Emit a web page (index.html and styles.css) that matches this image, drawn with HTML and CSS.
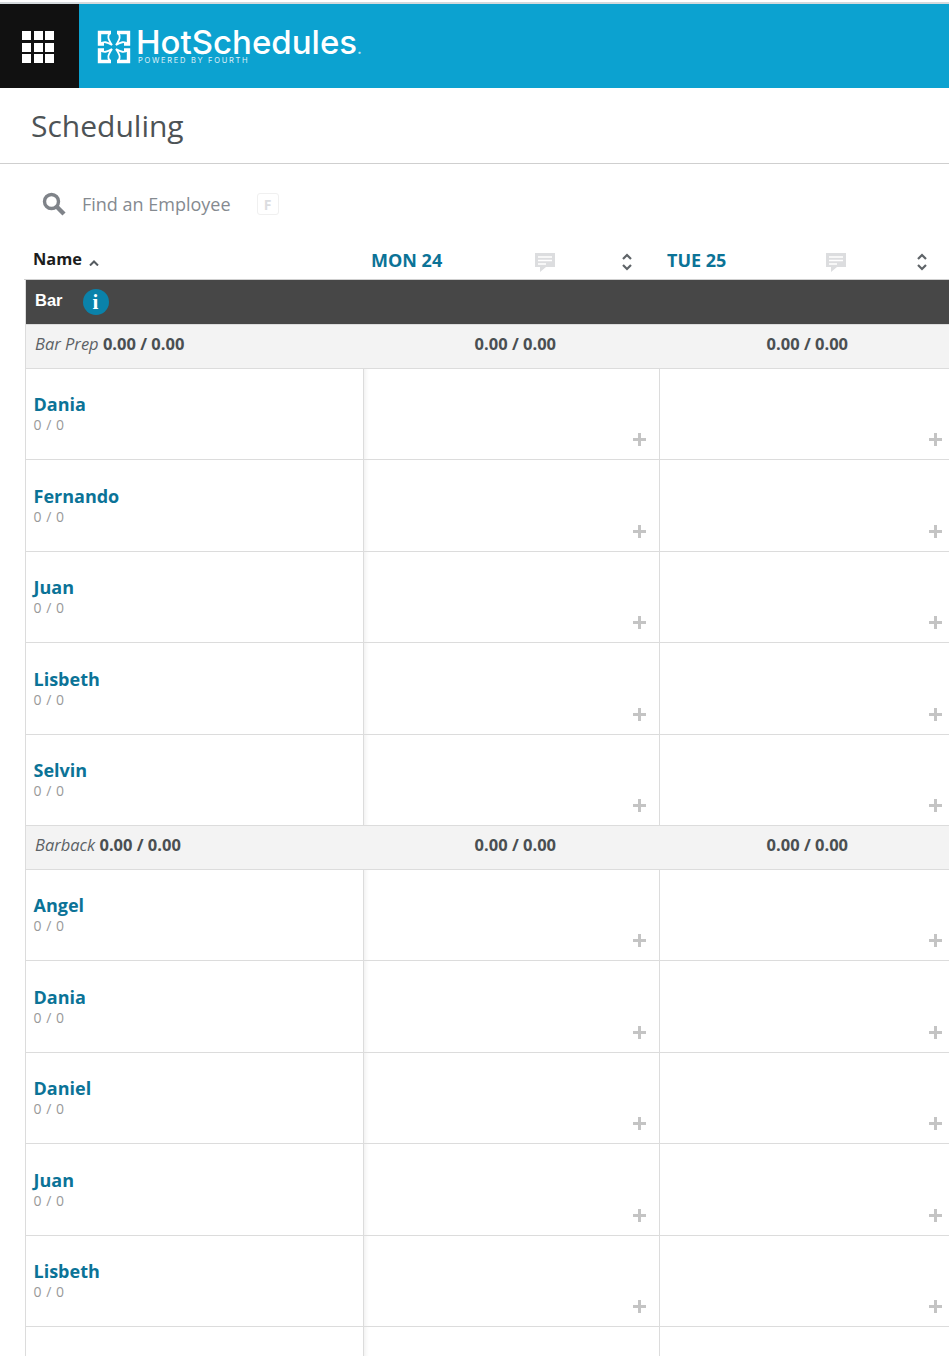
FILE: index.html
```html
<!DOCTYPE html>
<html lang="en">
<head>
    <meta charset="UTF-8">
    <meta name="viewport" content="width=device-width, initial-scale=1.0">
    <title>HotSchedules - Scheduling</title>
    <link rel="stylesheet" href="styles.css">
</head>
<body>
    <header class="top-bar">
        <button class="app-menu" aria-label="Apps">
            <span></span><span></span><span></span>
            <span></span><span></span><span></span>
            <span></span><span></span><span></span>
        </button>
        <div class="brand">
            <svg class="brand-mark" viewBox="0 0 34 34" width="34" height="34" fill="none" stroke="#fff">
                <g stroke-width="3.4">
                    <path d="M14 2.5H2.5V14H7"/>
                    <path d="M20 2.5H31.5V14H27"/>
                    <path d="M14 31.5H2.5V20H7"/>
                    <path d="M20 31.5H31.5V20H27"/>
                </g>
                <g stroke-width="1.8">
                    <path d="M13 3C10 6 11 9 15 15C10 12 7 11 3 14"/>
                    <path d="M21 3C24 6 23 9 19 15C24 12 27 11 31 14"/>
                    <path d="M13 31C10 28 11 25 15 19C10 22 7 23 3 20"/>
                    <path d="M21 31C24 28 23 25 19 19C24 22 27 23 31 20"/>
                </g>
            </svg>
            <div class="brand-text">
                <div class="brand-name">HotSchedules<span class="brand-dot">.</span></div>
                <div class="brand-sub">POWERED BY FOURTH</div>
            </div>
        </div>
    </header>

    <div class="page-title">
        <h1>Scheduling</h1>
    </div>

    <div class="search">
        <svg class="search-icon" viewBox="0 0 24 24" width="24" height="24" fill="none" stroke="#7f8389">
            <circle cx="9.5" cy="9.5" r="7" stroke-width="3.4"/>
            <path d="M14.8 14.8L22 22" stroke-width="4.4"/>
        </svg>
        <span class="search-label">Find an Employee</span>
        <span class="shortcut">F</span>
    </div>

    <div class="schedule">
        <div class="columns">
            <div class="col-name">
                Name
                <svg class="sort-up" viewBox="0 0 10 6" width="10" height="6" fill="none" stroke="#555b60" stroke-width="2"><path d="M1 5.5L5 1.5L9 5.5"/></svg>
            </div>
            <div class="col-day">
                <span class="day-label">MON 24</span>
                <svg class="note-icon" viewBox="0 0 20 19" width="20" height="19"><path fill="#dcdddf" d="M0 0H20V14H11L5 19V14H0Z"/><path stroke="#fff" stroke-width="1.6" d="M3 4H17M3 7.5H17M3 11H11"/></svg>
                <svg class="sort-both" viewBox="0 0 10 18" width="10" height="18" fill="none" stroke="#5f6468" stroke-width="2.2"><path d="M1 6L5 2L9 6M1 12L5 16L9 12"/></svg>
            </div>
            <div class="col-day col-day-last">
                <span class="day-label">TUE 25</span>
                <svg class="note-icon" viewBox="0 0 20 19" width="20" height="19"><path fill="#dcdddf" d="M0 0H20V14H11L5 19V14H0Z"/><path stroke="#fff" stroke-width="1.6" d="M3 4H17M3 7.5H17M3 11H11"/></svg>
                <svg class="sort-both" viewBox="0 0 10 18" width="10" height="18" fill="none" stroke="#5f6468" stroke-width="2.2"><path d="M1 6L5 2L9 6M1 12L5 16L9 12"/></svg>
            </div>
        </div>

        <div class="section-bar">
            <span class="section-name">Bar</span>
            <span class="info-badge">i</span>
        </div>

        <div class="role-row">
            <div class="role-name"><em>Bar Prep</em> <strong>0.00 / 0.00</strong></div>
            <div class="role-total">0.00 / 0.00</div>
            <div class="role-total role-total-last">0.00 / 0.00</div>
        </div>

        <div class="emp-row">
            <div class="emp-cell"><a class="emp-name">Dania</a><div class="emp-hours">0 / 0</div></div>
            <div class="day-cell"><span class="add"></span></div>
            <div class="day-cell"><span class="add"></span></div>
        </div>
        <div class="emp-row">
            <div class="emp-cell"><a class="emp-name">Fernando</a><div class="emp-hours">0 / 0</div></div>
            <div class="day-cell"><span class="add"></span></div>
            <div class="day-cell"><span class="add"></span></div>
        </div>
        <div class="emp-row">
            <div class="emp-cell"><a class="emp-name">Juan</a><div class="emp-hours">0 / 0</div></div>
            <div class="day-cell"><span class="add"></span></div>
            <div class="day-cell"><span class="add"></span></div>
        </div>
        <div class="emp-row">
            <div class="emp-cell"><a class="emp-name">Lisbeth</a><div class="emp-hours">0 / 0</div></div>
            <div class="day-cell"><span class="add"></span></div>
            <div class="day-cell"><span class="add"></span></div>
        </div>
        <div class="emp-row">
            <div class="emp-cell"><a class="emp-name">Selvin</a><div class="emp-hours">0 / 0</div></div>
            <div class="day-cell"><span class="add"></span></div>
            <div class="day-cell"><span class="add"></span></div>
        </div>

        <div class="role-row">
            <div class="role-name"><em>Barback</em> <strong>0.00 / 0.00</strong></div>
            <div class="role-total">0.00 / 0.00</div>
            <div class="role-total role-total-last">0.00 / 0.00</div>
        </div>

        <div class="emp-row">
            <div class="emp-cell"><a class="emp-name">Angel</a><div class="emp-hours">0 / 0</div></div>
            <div class="day-cell"><span class="add"></span></div>
            <div class="day-cell"><span class="add"></span></div>
        </div>
        <div class="emp-row">
            <div class="emp-cell"><a class="emp-name">Dania</a><div class="emp-hours">0 / 0</div></div>
            <div class="day-cell"><span class="add"></span></div>
            <div class="day-cell"><span class="add"></span></div>
        </div>
        <div class="emp-row">
            <div class="emp-cell"><a class="emp-name">Daniel</a><div class="emp-hours">0 / 0</div></div>
            <div class="day-cell"><span class="add"></span></div>
            <div class="day-cell"><span class="add"></span></div>
        </div>
        <div class="emp-row">
            <div class="emp-cell"><a class="emp-name">Juan</a><div class="emp-hours">0 / 0</div></div>
            <div class="day-cell"><span class="add"></span></div>
            <div class="day-cell"><span class="add"></span></div>
        </div>
        <div class="emp-row">
            <div class="emp-cell"><a class="emp-name">Lisbeth</a><div class="emp-hours">0 / 0</div></div>
            <div class="day-cell"><span class="add"></span></div>
            <div class="day-cell"><span class="add"></span></div>
        </div>
        <div class="emp-row">
            <div class="emp-cell"></div>
            <div class="day-cell"></div>
            <div class="day-cell"></div>
        </div>
    </div>
</body>
</html>
```

FILE: styles.css
```css
:root {
    --brand-blue: #0ca2d0;
    --link-color: #0b7397;
    --line-color: #dcdcdc;
    --text-color: #4a4f52;
}

html, body {
    height: 100%;
}

body {
    font-family: 'Open Sans', sans-serif;
    background-color: white;
    color: var(--text-color);
    margin: 0;
    overflow: hidden;
}

/* Top bar */
.top-bar {
    display: flex;
    height: 84px;
    margin-top: 2px;
    border-top: 2px solid #d5dadd;
    background-color: var(--brand-blue);
}

.app-menu {
    width: 79px;
    padding: 2px 22px 0;
    border: none;
    background-color: #111;
    display: grid;
    grid-template-columns: repeat(3, 9px);
    grid-auto-rows: 9px;
    gap: 2.5px;
    align-content: center;
}

.app-menu span {
    background-color: white;
}

.brand {
    display: flex;
    align-items: center;
    gap: 6px;
    margin-left: 18px;
}

.brand-mark {
    flex: none;
    margin-top: 1px;
}

.brand-text {
    color: white;
    font-family: 'Inter', sans-serif;
    margin-top: -1px;
}

.brand-name {
    font-size: 33px;
    line-height: 30px;
    font-weight: 500;
    margin-left: -1px;
}

.brand-dot {
    font-size: 16px;
    opacity: 0.7;
}

.brand-sub {
    font-size: 7.5px;
    line-height: 8px;
    letter-spacing: 1.7px;
    margin-left: 1px;
    margin-top: -6px;
    opacity: 0.85;
}

/* Title */
.page-title {
    height: 75px;
    border-bottom: 1px solid #cfcfcf;
    padding-left: 31px;
    display: flex;
    align-items: center;
}

h1 {
    margin: 0;
    font-size: 30px;
    font-weight: 400;
    color: #4d5356;
}

/* Search */
.search {
    display: flex;
    align-items: center;
    height: 80px;
    padding-left: 42px;
}

.search-icon {
    flex: none;
}

.search-label {
    margin-left: 16px;
    font-size: 18px;
    color: #858a90;
}

.shortcut {
    margin-left: 26px;
    width: 20px;
    height: 20px;
    border: 1px solid #f0f0f0;
    border-radius: 3px;
    font-size: 14px;
    font-weight: 700;
    color: #dcdde0;
    display: flex;
    align-items: center;
    justify-content: center;
}

/* Schedule table */
.schedule {
    margin-left: 25px;
}

.columns {
    display: grid;
    grid-template-columns: 338px 296px 1fr;
    height: 35px;
    border-bottom: 1px solid #cfcfcf;
    margin-left: -1px;
}

.col-name {
    padding-left: 9px;
    padding-bottom: 6px;
    font-size: 16.4px;
    font-weight: 700;
    color: #1c1c1c;
    display: flex;
    align-items: center;
    gap: 7px;
}

.sort-up {
    margin-top: 8px;
}

.col-day {
    display: flex;
    align-items: center;
    padding-left: 9px;
}

.day-label {
    width: 164px;
    font-size: 18px;
    font-weight: 700;
    color: var(--link-color);
    margin-top: -4px;
}

.col-day-last .day-label {
    width: 159px;
}

.note-icon {
    flex: none;
    margin-top: 1px;
}

.sort-both {
    flex: none;
    margin-left: 67px;
    margin-top: 1px;
}

.col-day-last .sort-both {
    margin-left: 71px;
}

.section-bar {
    height: 44px;
    border-bottom: 1px solid var(--line-color);
    border-left: 1px solid var(--line-color);
    background-color: #474747;
    display: flex;
    align-items: center;
    padding-left: 9px;
}

.section-name {
    font-family: 'Liberation Sans', sans-serif;
    font-size: 16.5px;
    font-weight: 700;
    color: white;
    margin-top: -3px;
}

.info-badge {
    margin-left: 20px;
    width: 26px;
    height: 26px;
    border-radius: 50%;
    background-color: #0a82aa;
    color: white;
    font-family: 'Liberation Serif', serif;
    font-size: 21px;
    font-weight: 700;
    display: flex;
    align-items: center;
    justify-content: center;
}

.role-row {
    display: grid;
    grid-template-columns: 337px 296px 1fr;
    height: 42.5px;
    border-left: 1px solid var(--line-color);
    border-bottom: 1px solid var(--line-color);
    background-color: #f3f3f3;
    align-items: center;
    font-size: 16.5px;
}

.role-name {
    padding-left: 9px;
    padding-bottom: 5px;
}

.role-name em {
    color: #5c6266;
}

.role-total {
    font-weight: 700;
    text-align: right;
    padding-right: 103px;
    padding-bottom: 5px;
}

.role-total-last {
    padding-right: 101px;
}

.emp-row {
    display: grid;
    grid-template-columns: 337px 296px 1fr;
    height: 91.5px;
    box-sizing: border-box;
    border-left: 1px solid var(--line-color);
    border-bottom: 1px solid var(--line-color);
}

.emp-cell {
    padding-left: 7.5px;
    padding-top: 23.5px;
}

.emp-name {
    display: block;
    font-size: 18px;
    line-height: 24px;
    font-weight: 700;
    color: var(--link-color);
}

.emp-hours {
    font-size: 14px;
    line-height: 17px;
    color: #999;
    letter-spacing: 0.5px;
}

.day-cell {
    border-left: 1px solid var(--line-color);
    box-shadow: inset 5px 0 5px -4px rgba(0, 0, 0, 0.08);
    display: flex;
    justify-content: flex-end;
    align-items: flex-end;
    padding: 0 13px 13px 0;
}

.day-cell:last-child {
    box-shadow: none;
    padding-right: 7px;
}

.add {
    position: relative;
    width: 13px;
    height: 13px;
}

.add::before,
.add::after {
    content: "";
    position: absolute;
    background-color: #c4c4c4;
}

.add::before {
    left: 5px;
    top: 0;
    width: 3px;
    height: 13px;
}

.add::after {
    left: 0;
    top: 5px;
    width: 13px;
    height: 3px;
}
```
